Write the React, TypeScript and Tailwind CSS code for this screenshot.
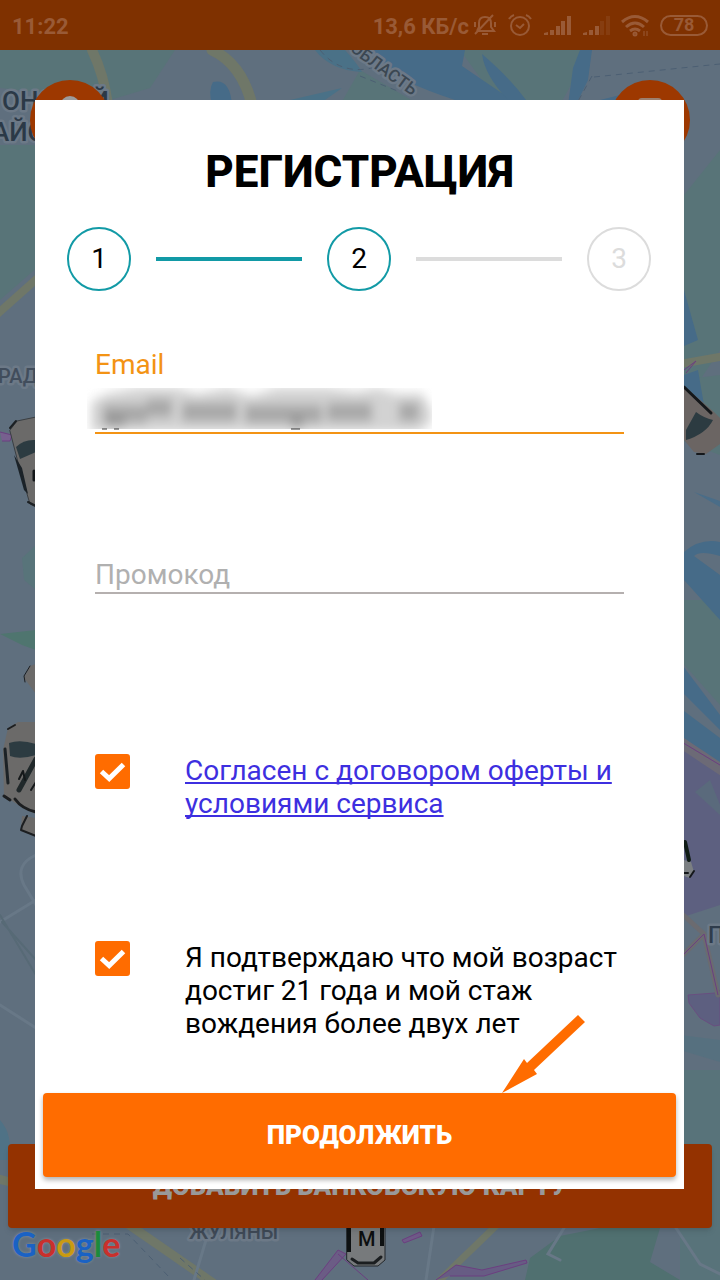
import { useState } from 'react';
import type { ReactNode } from 'react';

const STEPS = [1, 2, 3];
const CURRENT = 2;

const GOOGLE = [
  { ch: 'G', color: 'text-[#1a62c4]' },
  { ch: 'o', color: 'text-[#c9302c]' },
  { ch: 'o', color: 'text-[#c99a12]' },
  { ch: 'g', color: 'text-[#1a62c4]' },
  { ch: 'l', color: 'text-[#1c8a3c]' },
  { ch: 'e', color: 'text-[#c9302c]' },
];

function Map() {
  return (
    <svg className="absolute inset-0 size-full" viewBox="0 0 720 1280" preserveAspectRatio="xMidYMin slice" aria-hidden="true">
      <rect width="720" height="1280" fill="#5f6f7e" />

      {/* parks */}
      <path d="M0 50H175L150 88L110 100L0 88Z" fill="#587478" />
      <path d="M0 145H40V265L0 300Z" fill="#587478" />
      <path d="M460 50H590L560 105H500Z" fill="#587478" />
      <path d="M360 70L420 105H340Z" fill="#587478" />
      <path d="M680 200L720 150V350L680 410Z" fill="#587478" />
      <path d="M680 380L720 375V455L680 440Z" fill="#587478" />
      <path d="M22 558L36 545V590L24 580Z" fill="#58747a" />
      <path d="M0 634L36 630V650L22 645Z" fill="#4f756f" />
      <path d="M680 600H720V705L680 660Z" fill="#587478" />
      <path d="M680 1070H720V1280H680Z" fill="#58737a" />
      <path d="M560 1236L600 1228H660L650 1262L680 1280H525L530 1258Z" fill="#507070" />
      <path d="M0 1120Q14 1136 8 1160H0Z" fill="#4f7286" />

      {/* water */}
      <path d="M375 50H465L462 66L512 100H455Q400 82 360 56Z" fill="#466b88" />
      <path d="M482 54Q510 78 526 100H508Q485 76 482 54Z" fill="#466b88" />
      <path d="M580 50H592L588 80L576 105H568L573 68Z" fill="#466b88" />
      <path d="M213 82Q230 78 232 105H212Q208 90 213 82Z" fill="#466b88" />
      <path d="M290 100L342 88L325 100Z" fill="#4a7187" />
      <path d="M315 50H345Q356 62 362 72Q330 70 315 50Z" fill="#4a7187" />
      <path d="M600 100L620 95L630 105H600Z" fill="#466b88" />
      <path d="M684 290L698 340L684 346Z" fill="#466b88" />
      <path d="M684 375L698 370L704 405L684 392Z" fill="#466b88" />
      <path d="M694 492L720 501V507Z" fill="#4a6d88" />
      <path d="M684 552Q700 538 720 542V556Q700 550 694 556L720 575V620L684 580Z" fill="#466b88" />
      <path d="M680 662L720 715V730L680 690Z" fill="#466b88" />
      <path d="M680 708L720 738V765L680 735Z" fill="#466b88" />
      <path d="M680 1035L720 1040V1062L680 1050Z" fill="#56707f" />

      {/* industrial zones */}
      <path d="M680 745L720 765V905L680 918Z" fill="#5d6080" />
      <path d="M695 792L710 780L720 805V815Z" fill="#5a6a7c" />
      <path d="M688 995L715 993L720 990V1025L714 1026L700 1018L689 1003Z" fill="#5d5f80" stroke="#694f80" />

      {/* roads */}
      <g fill="none" strokeLinecap="round">
        <path d="M92 50Q104 75 108 105" stroke="#6f7768" strokeWidth="10" />
        <path d="M212 50Q242 64 252 105" stroke="#6f7768" strokeWidth="11" />
        <path d="M-5 316L40 276" stroke="#6f7768" strokeWidth="8" />
        <path d="M680 364L725 356" stroke="#6f7768" strokeWidth="8" />
        <path d="M680 742L725 772" stroke="#6c6a76" strokeWidth="11" />
        <path d="M680 912L704 934L718 995M704 934L680 958" stroke="#6b6b70" strokeWidth="5" />
        <path d="M-5 1178L10 1182M125 1222L216 1285" stroke="#6f7768" strokeWidth="9" />
        <path d="M500 1222L440 1280" stroke="#6f7768" strokeWidth="7" />
        <path d="M434 1226L426 1280M564 1228L548 1254L560 1260M676 1228L700 1264L720 1274M206 1240L194 1280M0 922L36 900M0 1005L36 1028M36 855Q14 865 24 885L36 905" stroke="#687887" strokeWidth="3" />
        <path d="M2 922L36 960M0 915L36 975" stroke="#576a76" strokeWidth="2" />
      </g>
      <g fill="none" stroke="#4c5f73" strokeWidth="1" strokeDasharray="6 5">
        <path d="M594 77L720 64M320 50Q340 75 372 68M360 76L400 92M592 76L576 105" />
        <path d="M92 1234H128L170 1278M180 1258L205 1280" />
      </g>
      <g fill="none" stroke="#6c3f80" strokeWidth="1">
        <path d="M402 1240L420 1232L422 1236L404 1243Z" fill="#6f5a88" />
        <path d="M436 1280L456 1265L482 1270L526 1260L527 1263L484 1276L450 1276" fill="#675c84" />
        <path d="M315 1280L338 1250L346 1254L322 1280M338 1254L368 1280" fill="#6b5c85" />
        <path d="M0 432L12 435L10 441H2" fill="#77608f" />
        <path d="M684 370L696 361L686 373" />
        <path d="M680 741L720 765M680 958L704 934L718 995" />
      </g>

      {/* cars */}
      <g strokeLinejoin="round" strokeLinecap="round">
        <path d="M10 430L17 421L36 417V507L30 504L20 470Z" fill="#6b6a69" stroke="#3a3e42" strokeWidth="1" />
        <path d="M16 447Q24 439 36 440V452L20 459Z" fill="#2c3b41" />
        <path d="M14 455L24 490L28 494L22 468Z" fill="#1b2228" />
        <path d="M34 471V480" stroke="#14171a" strokeWidth="3" />
        <path d="M10 428L16 421M28 502L36 506" stroke="#1c2023" strokeWidth="2" />

        <path d="M24 678L30 666L36 664V694Z" fill="#6b6a69" />
        <path d="M25 682L24 676L30 666" fill="none" stroke="#1c1e20" strokeWidth="1" />
        <path d="M8 728L18 722H36V814L20 806L4 796L3 750Z" fill="#6b6a69" />
        <path d="M8 729L15 725" stroke="#1c1e20" strokeWidth="2" />
        <path d="M9 743Q20 739 36 744V755Q20 760 10 756Z" fill="#2c3b41" />
        <path d="M5 749L8 783" fill="none" stroke="#1c2226" strokeWidth="3" />
        <path d="M36 759L19 790" stroke="#20282a" strokeWidth="5" />
        <path d="M19 779L23 771L25 780M31 790L36 782" fill="none" stroke="#15181a" strokeWidth="2" />
        <path d="M4 796L10 800M15 799Q22 809 36 812" fill="none" stroke="#1c1e20" strokeWidth="3" />
        <path d="M22 816L36 818V836L21 830Z" fill="#6b6a69" />
        <path d="M27 816L22 826L21 830L36 836" fill="none" stroke="#1c1e20" strokeWidth="2" />

        <path d="M684 386L714 412L720 418V444L706 454L694 452L684 440Z" fill="#6b6563" />
        <path d="M684 387L711 413" stroke="#14171a" strokeWidth="3" />
        <path d="M696 412Q704 418 713 420Q706 434 686 440V430Z" fill="#2c3b41" />
        <path d="M697 454H704" stroke="#14171a" strokeWidth="2" />

        <path d="M684 860L691 862L694 872L690 878L684 876Z" fill="#7b7f82" />
        <path d="M685 842L689 860" stroke="#101c16" strokeWidth="4" />
        <path d="M684 873H688M694 871L690 877" fill="none" stroke="#14171a" strokeWidth="2" />

        <path d="M347 1222H385V1260L378 1266H354L347 1260Z" fill="#777a7c" stroke="#23272a" strokeWidth="1" />
        <path d="M349 1228V1252M382 1228V1246" stroke="#0e1112" strokeWidth="4" strokeLinecap="butt" />
        <path d="M352 1259L358 1263H374L381 1257" fill="none" stroke="#1b1e20" strokeWidth="3" />
      </g>

      {/* place names */}
      <g fontFamily="Roboto, sans-serif" fontWeight="500" stroke="#6c7987" strokeWidth="5" strokeLinejoin="round" paintOrder="stroke">
        <text x="2" y="110" fontSize="26" fill="#2b3947">ОНСКИЙ</text>
        <text x="-8" y="141" fontSize="26" fill="#2b3947">АЙОН</text>
        <text x="-2" y="383" fontSize="20" fill="#414d5c">РАД</text>
        <text x="708" y="943" fontSize="23" fill="#2f3c4c">П</text>
        <text x="189" y="1239" fontSize="20" fill="#3f4a57">ЖУЛЯНЫ</text>
        <text x="412" y="96" fontSize="17" fill="#3b4752" textAnchor="end" transform="rotate(36 412 96)">ОБЛАСТЬ</text>
        <text x="358" y="1246" fontSize="20" fill="#0d0f10" stroke="none">M</text>
      </g>
    </svg>
  );
}

function StatusBar() {
  return (
    <header className="relative flex h-[50px] items-center justify-between bg-[#7f3100] px-3 text-[22px] font-bold text-[#995a36]">
      <span className="pt-0.5">11:22</span>
      <div className="flex items-center gap-[11px]">
        <div className="flex items-center gap-1">
          <span className="pt-0.5">13,6 КБ/с</span>
          <svg className="h-6 w-6" viewBox="0 0 24 24" fill="none" stroke="currentColor" strokeWidth="2">
            <path d="M2 21L20 2M4 18H21L18 14V10Q18 4 12 4Q6 4 6 10V14L4 18M9 21H15M2 9V14M22 9V14" />
          </svg>
        </div>
        <svg className="h-6 w-6" viewBox="0 0 24 24" fill="none" stroke="currentColor" strokeWidth="2">
          <circle cx="12" cy="13" r="9" />
          <path d="M8 12L12 15L16 11M1 6Q3 3 6 2M23 6Q21 3 18 2" />
        </svg>
        <svg className="h-6 w-7" viewBox="0 0 28 24" fill="currentColor">
          <path d="M1 22V20L5 19V22ZM7 17H11V22H7ZM13 13H17V22H13ZM18 8H22V22H18ZM24 3H28V22H24Z" />
        </svg>
        <svg className="h-6 w-7" viewBox="0 0 28 24" fill="currentColor">
          <path d="M1 22V20L5 19V22ZM7 17H11V22H7ZM13 13H17V22H13Z" />
          <path d="M18 8H22V22H18ZM24 3H28V22H24Z" opacity="0.3" />
        </svg>
        <svg className="h-6 w-7" viewBox="0 0 28 24" fill="none" stroke="currentColor" strokeWidth="3">
          <path d="M1 9Q14 -2 27 9M5 14Q14 6 23 14M9 18Q14 14 19 18" />
          <circle cx="14" cy="21" r="1" />
          <path d="M23 18V23M26 18V23" strokeWidth="1" />
        </svg>
        <span className="flex h-[21px] w-12 items-center justify-center rounded-full border-2 border-current text-lg">78</span>
      </div>
    </header>
  );
}

function Steps() {
  return (
    <ol className="mt-[29px] flex items-center gap-[25px] pr-[33px] pl-8 text-[28px]">
      {STEPS.map((n) => (
        <li key={n} className={n > 1 ? 'flex flex-1 items-center gap-[25px]' : 'flex items-center'}>
          {n > 1 && <span className={`h-1 flex-1 ${n <= CURRENT ? 'bg-[#129aa6]' : 'bg-[#dcdcdc]'}`} />}
          <span className={`flex size-16 items-center justify-center rounded-full border-2 ${n <= CURRENT ? 'border-[#129aa6] text-black' : 'border-[#dcdcdc] text-[#dcdcdc]'}`}>{n}</span>
        </li>
      ))}
    </ol>
  );
}

function CheckRow({ id, children }: { id: string; children: ReactNode }) {
  const [checked, setChecked] = useState(true);
  return (
    <div className="flex items-start gap-[55px] text-[28px] leading-[33px]">
      <span className="grid size-[35px] shrink-0">
        <input id={id} type="checkbox" checked={checked} onChange={(e) => setChecked(e.target.checked)} className="col-start-1 row-start-1 size-[35px] appearance-none rounded-[3px] border-2 border-[#ff6c00] checked:bg-[#ff6c00]" />
        {checked && (
          <svg className="pointer-events-none col-start-1 row-start-1 size-[35px]" viewBox="0 0 35 35" fill="none" stroke="white" strokeWidth="5">
            <path d="M6.500 17.500L14.200 24.500L28.500 10.500" />
          </svg>
        )}
      </span>
      <label htmlFor={id} className="flex-1">{children}</label>
    </div>
  );
}

export default function App() {
  const [email, setEmail] = useState('');
  const [promo, setPromo] = useState('');

  return (
    <div className="relative min-h-screen overflow-hidden bg-[#5f6f7e] font-['Roboto',sans-serif]">
      <Map />
      <StatusBar />

      <button aria-label="Профиль" className="absolute top-20 left-[30px] flex size-20 justify-center rounded-full bg-[#9d3800] pt-4">
        <span className="size-5 rounded-full bg-[#9c9c9c]" />
      </button>
      <button aria-label="Меню" className="absolute top-20 right-[30px] flex size-20 justify-center rounded-full bg-[#9d3800] pt-[18px]">
        <span className="h-5 w-6 rounded-sm bg-[#9c8070]" />
      </button>
      <div className="absolute inset-x-2 bottom-2">
        <button className="h-[84px] w-full rounded bg-[#943200] text-[26px] font-black text-[#999] shadow-md">ДОБАВИТЬ БАНКОВСКУЮ КАРТУ</button>
        <div className="flex h-11 items-start pl-1 font-['Lato',sans-serif] text-[34px] leading-8 font-bold [text-shadow:0_0_3px_#8593a0]">
          {GOOGLE.map((g, i) => (
            <span key={i} className={g.color}>{g.ch}</span>
          ))}
        </div>
      </div>

      <main role="dialog" aria-labelledby="title" className="relative mt-[50px] mr-9 mb-[91px] ml-[35px] bg-white pt-[46px] pb-3">
        <h1 id="title" className="text-center text-[44px] leading-[52px] font-extrabold">РЕГИСТРАЦИЯ</h1>
        <Steps />

        <form className="mt-[57px]" onSubmit={(e) => e.preventDefault()}>
          <div className="px-[60px] text-[28px] leading-[33px]">
            <div className="relative">
              <label htmlFor="email" className="block text-[#f39314]">Email</label>
              <input id="email" type="email" value={email} onChange={(e) => setEmail(e.target.value)} className="block h-[53px] w-full border-b-2 border-[#f39314] focus:outline-none" />
              {/* hidden address */}
              {!email && (
                <svg className="pointer-events-none absolute bottom-0.5 -left-2 h-11 w-[350px]" viewBox="0 0 350 44" aria-hidden="true">
                  <defs>
                    <filter id="soft" x="-10%" y="-60%" width="120%" height="220%">
                      <feGaussianBlur stdDeviation="5 6" />
                    </filter>
                    <clipPath id="strip">
                      <rect width="345" height="41" />
                    </clipPath>
                  </defs>
                  <g clipPath="url(#strip)">
                    <g filter="url(#soft)">
                      <path d="M4 14L20 6L50 0H90L110 6L140 0L165 8L190 0H240L270 4L290 0L310 6H335L344 20V36L330 44H4Z" fill="#d2d2d2" />
                      <path d="M16 26H60M60 20H85M95 24H150M158 26H235M240 24H285M312 24H332" stroke="#a6a6a6" strokeWidth="18" />
                      <path d="M18 33H38M204 34H216" stroke="#909090" strokeWidth="10" />
                    </g>
                  </g>
                  <path d="M15 41H20M27 41H32M204 41H213" stroke="#333" strokeWidth="1" />
                </svg>
              )}
            </div>

            <input type="text" aria-label="Промокод" placeholder="Промокод" value={promo} onChange={(e) => setPromo(e.target.value)} className="mt-[116px] block h-11 w-full border-b-2 border-[#b5b0af] pt-1.5 placeholder:text-[#b0b0b0] focus:outline-none" />

            <div className="mt-40 flex flex-col gap-[121px]">
              <CheckRow id="terms">
                <a href="#terms" className="text-[#3d2fe0] underline decoration-2 underline-offset-2 [text-decoration-skip-ink:none]">Согласен с договором оферты и условиями сервиса</a>
              </CheckRow>
              <CheckRow id="age">Я подтверждаю что мой возраст достиг 21 года и мой стаж вождения более двух лет</CheckRow>
            </div>
          </div>

          <div className="relative mt-[53px] px-2">
            <svg className="absolute right-[98px] bottom-full h-[78px] w-[84px]" viewBox="0 0 84 78" fill="#ff6c00" aria-hidden="true">
              <path d="M0 78L22 44L25 48L76 0L83 7L32 55L35 59Z" />
            </svg>
            <button type="submit" className="h-[84px] w-full rounded bg-[#ff6c00] text-[26px] font-black text-white shadow-[0_3px_5px_rgba(0,0,0,0.3)]">ПРОДОЛЖИТЬ</button>
          </div>
        </form>
      </main>
    </div>
  );
}
